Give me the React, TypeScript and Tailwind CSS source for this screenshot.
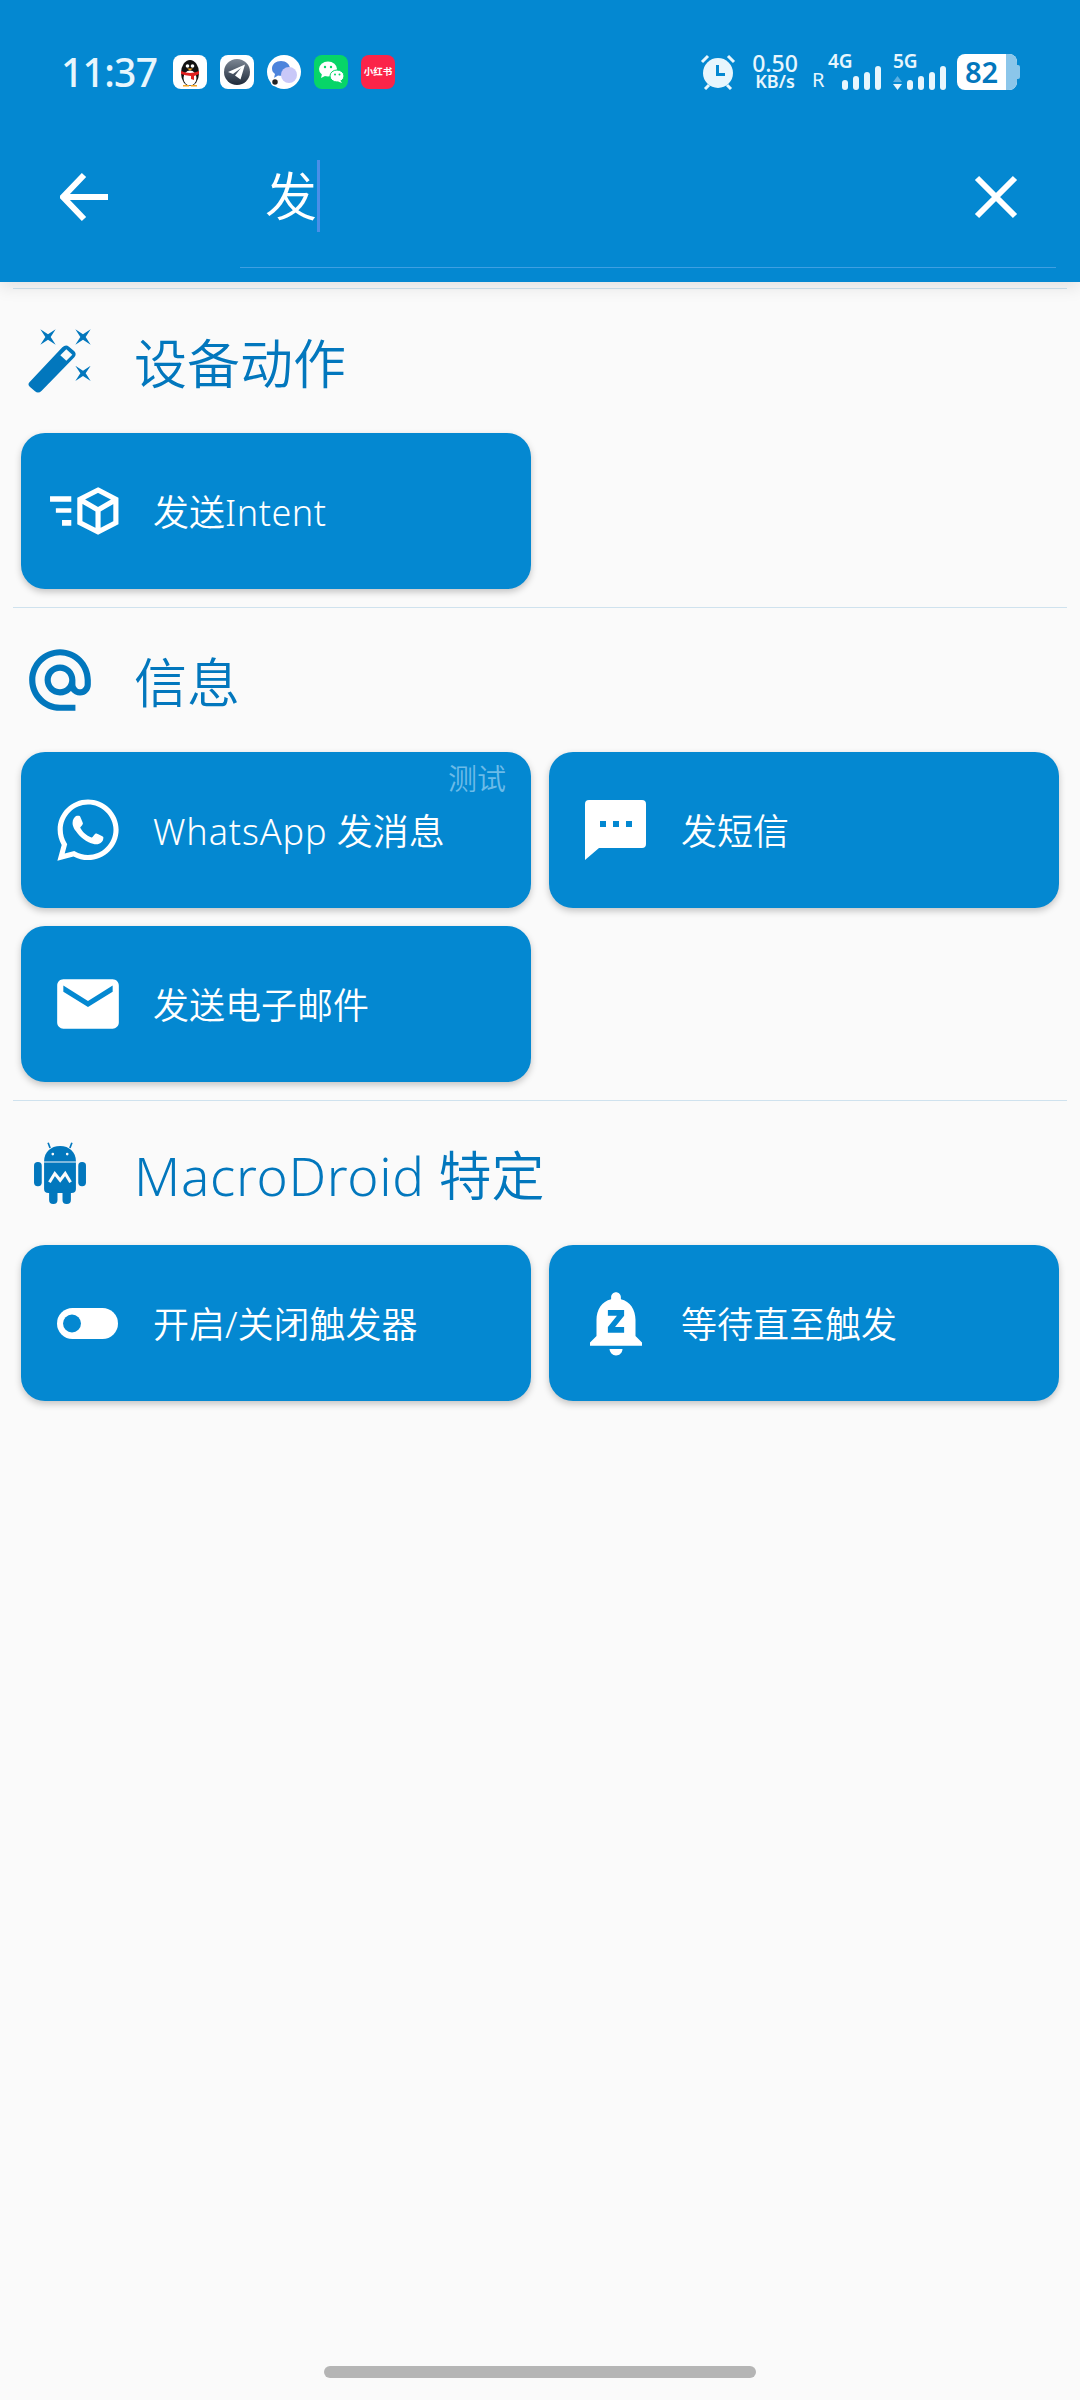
import type { ReactNode } from 'react';
import { FaWhatsapp } from 'react-icons/fa';
import { MdAlternateEmail, MdEmail, MdNotificationsPaused } from 'react-icons/md';

function WandIcon() {
  const star = (x: number, y: number) =>
    `M${x - 23} ${y - 23}L${x} ${y - 8}L${x + 23} ${y - 23}L${x + 8} ${y}L${x + 23} ${y + 23}L${x} ${y + 8}L${x - 23} ${y + 23}L${x - 8} ${y}Z`;
  return (
    <svg width="66" height="66" viewBox="72 88 198 198" className="shrink-0">
      <path fill="#0277bd" d="M80 250 L178 146 Q188 136 198 144 L214 158 Q222 166 214 176 L116 276 Q106 286 96 278 L82 266 Q72 258 80 250Z" />
      <path fill="#fafafa" d="M172 170 L190 152 L208 168 L190 186Z" />
      <path fill="#0277bd" d={star(135, 115) + star(240, 115) + star(240, 224)} />
    </svg>
  );
}

function AndroidIcon() {
  return (
    <svg width="54" height="62" viewBox="0 0 155 185" className="shrink-0">
      <g fill="#0277bd">
        <path d="M30 58 C30 30 50 12 78 12 C105 12 125 30 125 58Z" />
        <path d="M30 61H125V140Q125 152 112 152H43Q30 152 30 140Z" />
        <rect x="0" y="60" width="23" height="72" rx="11" />
        <rect x="132" y="60" width="23" height="72" rx="11" />
        <rect x="45" y="140" width="25" height="45" rx="12" />
        <rect x="85" y="140" width="25" height="45" rx="12" />
      </g>
      <path d="M48 18L42 2M107 18L113 2" stroke="#0277bd" strokeWidth="5" />
      <circle cx="56" cy="36" r="4" fill="#fafafa" />
      <circle cx="99" cy="36" r="4" fill="#fafafa" />
      <path d="M46 120L62 94L78 114L93 94L109 120" fill="none" stroke="#fafafa" strokeWidth="9" />
    </svg>
  );
}

function IntentIcon() {
  return (
    <svg width="71" height="50" viewBox="145 558 207 150" preserveAspectRatio="none" className="-ml-[6px] shrink-0">
      <path fill="#fff" d="M148 589h62v16h-62zM165 625h45v13h-45zM183 660h27v17h-27z" />
      <path
        fill="none"
        stroke="#fff"
        strokeWidth="15"
        d="M288 570L340 598V668L288 696L235 668V598ZM238 600L288 630L338 600M288 630V692"
      />
    </svg>
  );
}

function SmsIcon() {
  return (
    <svg width="61" height="60" viewBox="0 0 61 60" className="shrink-0">
      <path fill="#fff" d="M4 0H57Q61 0 61 4V44Q61 48 57 48H14L0 60V4Q0 0 4 0Z" />
      <path fill="#0488d1" d="M15 21h6v6h-6zM28 21h6v6h-6zM41 21h6v6h-6z" />
    </svg>
  );
}

function ToggleIcon() {
  return (
    <svg width="61" height="31" viewBox="0 0 61 31" className="shrink-0">
      <rect width="61" height="31" rx="15.5" fill="#fff" />
      <circle cx="15" cy="15.5" r="9" fill="#0488d1" />
    </svg>
  );
}

function AlarmIcon() {
  return (
    <svg width="36" height="37" viewBox="0 0 36 37">
      <path d="M2 9L8 3M34 9L28 3M5 36L9 32M31 36L27 32" stroke="#e8f6fd" strokeWidth="3" />
      <circle cx="18" cy="20" r="15" fill="#e8f6fd" />
      <path d="M16 12h3v8h6v3h-9z" fill="#0488d1" />
    </svg>
  );
}

function SignalBars() {
  const heights = [10, 14, 18, 24];
  return (
    <div className="flex items-end gap-[5px]">
      {heights.map((h) => (
        <div key={h} className="w-[6px] rounded-[3px] bg-[#e8f6fd]" style={{ height: h }} />
      ))}
    </div>
  );
}

function QQIcon() {
  return (
    <svg width="34" height="34" viewBox="0 0 34 34">
      <rect width="34" height="34" rx="8" fill="#fff" />
      <ellipse cx="17" cy="18" fill="#111" rx="9" ry="13" />
      <ellipse cx="17" cy="23" rx="6.500" ry="7.500" fill="#fff" />
      <circle cx="14.500" cy="11" r="1.800" fill="#fff" />
      <circle cx="19.500" cy="11" r="1.800" fill="#fff" />
      <path d="M14 13.500h6l-3 2z" fill="#f5a623" />
      <path d="M8 16q9 4 18 0v3q-3 1.500-5 2v4l-3-1v-3q-6-.5-10-2z" fill="#e02020" />
      <path d="M10 30h6v1.500h-6zM18 30h6v1.500h-6z" fill="#f5a623" />
    </svg>
  );
}

function TelegramIcon() {
  return (
    <svg width="34" height="34" viewBox="0 0 34 34">
      <defs>
        <linearGradient id="plane-bg" x1="0" y1="0" x2="0" y2="1">
          <stop offset="0" stopColor="#7d8794" />
          <stop offset="1" stopColor="#1f2a3a" />
        </linearGradient>
      </defs>
      <rect width="34" height="34" rx="8" fill="#fff" />
      <circle cx="17" cy="17" r="13" fill="url(#plane-bg)" />
      <path d="M25 9.500L8 17l5 2 8-6-6 7.500 5.500 4z" fill="#fff" />
    </svg>
  );
}

function ChatIcon() {
  return (
    <svg width="34" height="34" viewBox="0 0 34 34">
      <circle cx="17" cy="17" r="17" fill="#fff" />
      <path d="M14 6c-5 0-9 3-9 7.500 0 2.500 1 4 3 5.500l-1 4 4-2.500c1 .2 2 .3 3 .3 5 0 9-3.300 9-7.300S19 6 14 6z" fill="#4d84dc" />
      <circle cx="22" cy="20" r="8" fill="#c9c8f8" />
      <circle cx="8" cy="27" r="3.500" fill="#222" stroke="#fff" strokeWidth="1.500" />
    </svg>
  );
}

function WeChatIcon() {
  return (
    <svg width="34" height="34" viewBox="0 0 34 34">
      <rect width="34" height="34" rx="8" fill="#07d568" />
      <ellipse cx="14" cy="14" rx="9" ry="7.500" fill="#fff" />
      <path d="M8 19l-1 4 5-2.500z" fill="#fff" />
      <ellipse cx="23" cy="21" rx="7" ry="6" fill="#fff" stroke="#07d568" />
      <path d="M26 25l2 3-4-1.500z" fill="#fff" />
      <circle cx="11" cy="12" r="1.200" fill="#07d568" />
      <circle cx="17" cy="12" r="1.200" fill="#07d568" />
      <circle cx="21" cy="19.500" r="1" fill="#07d568" />
      <circle cx="25.500" cy="19.500" r="1" fill="#07d568" />
    </svg>
  );
}

function StatusBar() {
  return (
    <div className="flex h-[37px] items-center justify-between pl-[61px] pr-[60px] text-[#e8f6fd]">
      <div className="flex items-center">
        <span className="w-[112px] text-[39px] font-medium leading-none tracking-[-0.7px]">11:37</span>
        <div className="flex items-center gap-[13px]">
          <QQIcon />
          <TelegramIcon />
          <ChatIcon />
          <WeChatIcon />
          <div className="flex h-[34px] w-[34px] items-center justify-center rounded-[8px] bg-[#fb2449] text-[9.5px] font-bold leading-none whitespace-nowrap text-white">
            小红书
          </div>
        </div>
      </div>

      <div className="flex items-center">
        <AlarmIcon />
        <div className="ml-[15px] flex w-[48px] flex-col items-center font-medium leading-none">
          <span className="text-[23px] leading-[20px]">0.50</span>
          <span className="text-[18px] font-semibold leading-[17px]">KB/s</span>
        </div>
        <span className="ml-[13px] mt-[17px] w-[13px] text-[20px] leading-none">R</span>
        <div className="ml-[3px] flex flex-col items-start">
          <span className="text-[19px] font-semibold leading-[16px]">4G</span>
          <div className="ml-[14px] mt-[-3px]">
            <SignalBars />
          </div>
        </div>
        <div className="ml-[12px] flex flex-col items-start">
          <span className="text-[19px] font-semibold leading-[16px]">5G</span>
          <div className="mt-[-3px] flex items-end gap-[5px]">
            <svg width="9" height="14" viewBox="0 0 9 14">
              <path d="M4.500 0L9 6H0z" fill="#5cb0e2" />
              <path d="M4.500 14L9 8H0z" fill="#e8f6fd" />
            </svg>
            <SignalBars />
          </div>
        </div>
        <div className="ml-[11px] flex h-[36px] w-[60px] items-center overflow-hidden rounded-[8px] bg-white">
          <span className="w-[49px] text-center text-[29px] font-semibold leading-none text-[#0277bd]">82</span>
          <div className="h-full w-[11px] bg-[#8bc6ea]" />
        </div>
        <div className="h-[14px] w-[3px] rounded-r-[2px] bg-[#8bc6ea]" />
      </div>
    </div>
  );
}

function SearchBar() {
  return (
    <div className="mt-[70px] flex items-start pl-[60px]">
      <svg width="48" height="72" viewBox="0 0 48 72" className="mt-px shrink-0">
        <path d="M24 14L3 36L24 58M3 36H48" fill="none" stroke="#fff" strokeWidth="6" />
      </svg>
      <div className="relative ml-[132px] flex h-[108px] w-[816px] items-start border-b border-[#3f9fe2] pl-[25px]">
        <span className="text-[52px] font-[350] leading-[72px] text-white">发</span>
        <div className="h-[72px] w-[3px] bg-[#4a8fe8]" />
        <svg width="44" height="44" viewBox="0 0 44 44" className="absolute right-[38px] top-[15px]">
          <path d="M3 3L41 41M41 3L3 41" stroke="#fff" strokeWidth="6" />
        </svg>
      </div>
    </div>
  );
}

function ActionCard({ icon, label, badge }: { icon: ReactNode; label: ReactNode; badge?: string }) {
  return (
    <div className="relative flex h-[156px] items-center rounded-[24px] bg-[#0488d1] pl-[36px] shadow-[0_3px_7px_rgba(0,0,0,0.22)]">
      <div className="flex w-[61px] shrink-0 items-center justify-center">{icon}</div>
      <span className="ml-[35px] pt-[4px] text-[36px] font-[350] leading-none text-white">{label}</span>
      {badge && <span className="absolute right-[25px] top-[9px] text-[29px] font-[350] leading-[36px] text-[#6cbbe8]">{badge}</span>}
    </div>
  );
}

function Section({ icon, title, children }: { icon: ReactNode; title: ReactNode; children: ReactNode }) {
  return (
    <section>
      <div className="mx-[13px] h-px bg-[#cfe2ee]" />
      <div className="flex h-[144px] items-center pl-[28px]">
        <div className="flex w-[64px] shrink-0 items-center justify-center">{icon}</div>
        <h2 className="ml-[42px] pt-[4px] text-[53px] font-[350] leading-none text-[#0277bd]">{title}</h2>
      </div>
      <div className="grid grid-cols-2 gap-[18px] px-[21px] pb-[18px]">{children}</div>
    </section>
  );
}

export default function App() {
  return (
    <div className="flex min-h-[2400px] w-[1080px] flex-col bg-[#fafafa] [font-family:'Noto_Sans','Noto_Sans_CJK_SC',sans-serif]">
      <header className="relative h-[282px] bg-[#0488d1] pt-[53px] shadow-[0_5px_16px_rgba(0,0,0,0.1)]">
        <StatusBar />
        <SearchBar />
      </header>

      <main className="pt-[6px]">
        <Section icon={<WandIcon />} title="设备动作">
          <ActionCard
            icon={<IntentIcon />}
            label={
              <>
                发送<span className="tracking-[0.5px]">Intent</span>
              </>
            }
          />
        </Section>

        <Section icon={<MdAlternateEmail size={74} color="#0277bd" className="shrink-0" />} title="信息">
          <ActionCard
            icon={<FaWhatsapp size={70} color="#fff" className="shrink-0" />}
            label={
              <>
                <span className="tracking-[0.9px]">WhatsApp</span> 发消息
              </>
            }
            badge="测试"
          />
          <ActionCard icon={<SmsIcon />} label="发短信" />
          <ActionCard icon={<MdEmail size={74} color="#fff" className="shrink-0" />} label="发送电子邮件" />
        </Section>

        <Section
          icon={<AndroidIcon />}
          title={
            <>
              <span className="tracking-[0.7px]">MacroDroid</span> 特定
            </>
          }
        >
          <ActionCard icon={<ToggleIcon />} label="开启/关闭触发器" />
          <ActionCard icon={<MdNotificationsPaused size={78} color="#fff" className="shrink-0" />} label="等待直至触发" />
        </Section>
      </main>

      <div className="mb-[22px] mt-auto flex justify-center">
        <div className="h-[12px] w-[432px] rounded-full bg-[#b5b5b5]" />
      </div>
    </div>
  );
}
